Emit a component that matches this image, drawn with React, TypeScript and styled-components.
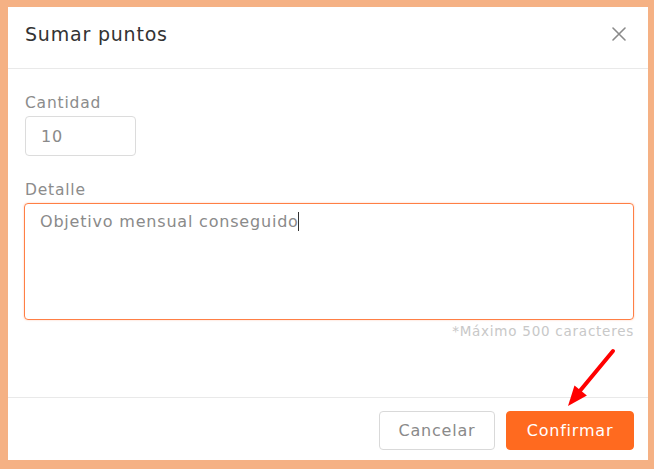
import styled, { createGlobalStyle } from 'styled-components'

const GlobalStyle = createGlobalStyle`
  html, body {
    margin: 0;
    padding: 0;
    background: #f5b184;
  }
  body {
    font-family: 'DejaVu Sans', 'Liberation Sans', sans-serif;
    letter-spacing: 0.8px;
  }
`

export default function App() {
  return (
    <Page>
      <GlobalStyle />
      <Modal>
        <Header>
          <Title>Sumar puntos</Title>
          <CloseButton aria-label="Cerrar">
            <svg width="14" height="14" viewBox="0 0 14 14">
              <path d="M1 1 L13 13 M13 1 L1 13" stroke="#8a8a8a" strokeWidth="1.6" strokeLinecap="round" />
            </svg>
          </CloseButton>
        </Header>
        <Body>
          <Field>
            <Label>Cantidad</Label>
            <SmallInput>10</SmallInput>
          </Field>
          <Field>
            <Label>Detalle</Label>
            <TextArea>
              Objetivo mensual conseguido<Caret />
            </TextArea>
            <Hint>*Máximo 500 caracteres</Hint>
          </Field>
        </Body>
        <Footer>
          <Button>Cancelar</Button>
          <Button primary>Confirmar</Button>
        </Footer>
      </Modal>
      <Arrow width="60" height="66" viewBox="0 0 60 66">
        <line x1="53" y1="6" x2="19" y2="47" stroke="#ff0000" strokeWidth="4" strokeLinecap="round" />
        <polygon points="8,61 14.5,40.4 26.9,50.6" fill="#ff0000" />
      </Arrow>
    </Page>
  )
}

const Page = styled.div`
  position: relative;
  width: 654px;
  height: 469px;
  box-sizing: border-box;
  padding: 7px 6px 9px 8px;
`

const Modal = styled.div`
  display: flex;
  flex-direction: column;
  height: 100%;
  background: #ffffff;
`

const Header = styled.div`
  box-sizing: border-box;
  display: flex;
  align-items: center;
  justify-content: space-between;
  height: 62px;
  padding: 0 22px 7px 17px;
  border-bottom: 1px solid #e9e9e9;
`

const Title = styled.div`
  font-size: 19px;
  color: #333333;
`

const CloseButton = styled.div`
  display: flex;
  align-items: center;
  justify-content: center;
  width: 14px;
  height: 14px;
`

const Body = styled.div`
  flex: 1;
  display: flex;
  flex-direction: column;
  gap: 24px;
  padding: 24px 14px 0 16px;
`

const Field = styled.div`
  display: flex;
  flex-direction: column;
`

const Label = styled.div`
  font-size: 15.5px;
  line-height: 20px;
  color: #8c8c8c;
  margin-bottom: 3px;
  padding-left: 1px;
`

const SmallInput = styled.div`
  box-sizing: border-box;
  width: 111px;
  height: 40px;
  margin-left: 1px;
  padding: 0 15px;
  display: flex;
  align-items: center;
  border: 1px solid #dcdcdc;
  border-radius: 4px;
  font-size: 16px;
  color: #8a8a8a;
`

const TextArea = styled.div`
  box-sizing: border-box;
  height: 117px;
  padding: 6px 15px;
  border: 1px solid #ff7f45;
  border-radius: 4px;
  box-shadow: 0 0 2px rgba(255, 120, 60, 0.4);
  font-size: 16px;
  line-height: 24px;
  color: #8a8a8a;
`

const Caret = styled.span`
  display: inline-block;
  width: 1px;
  height: 19px;
  margin-left: -0.8px;
  background: #333333;
  vertical-align: -4px;
`

const Hint = styled.div`
  align-self: flex-end;
  margin-top: 3px;
  font-size: 13.5px;
  letter-spacing: 0.75px;
  color: #c8c8c8;
`

const Footer = styled.div`
  display: flex;
  justify-content: flex-end;
  gap: 11px;
  padding: 13px 14px 10px;
  border-top: 1px solid #e9e9e9;
`

const Button = styled.button<{ primary?: boolean }>`
  box-sizing: border-box;
  height: 39px;
  padding: 0;
  width: ${(p) => (p.primary ? '128px' : '116px')};
  border-radius: 4px;
  border: 1px solid ${(p) => (p.primary ? '#ff6a1f' : '#d9d9d9')};
  background: ${(p) => (p.primary ? '#ff6a1f' : '#ffffff')};
  color: ${(p) => (p.primary ? '#ffffff' : '#8a8a8a')};
  font-family: 'DejaVu Sans', 'Liberation Sans', sans-serif;
  font-size: 16px;
  letter-spacing: 0.8px;
`

const Arrow = styled.svg`
  position: absolute;
  left: 560px;
  top: 345px;
`
